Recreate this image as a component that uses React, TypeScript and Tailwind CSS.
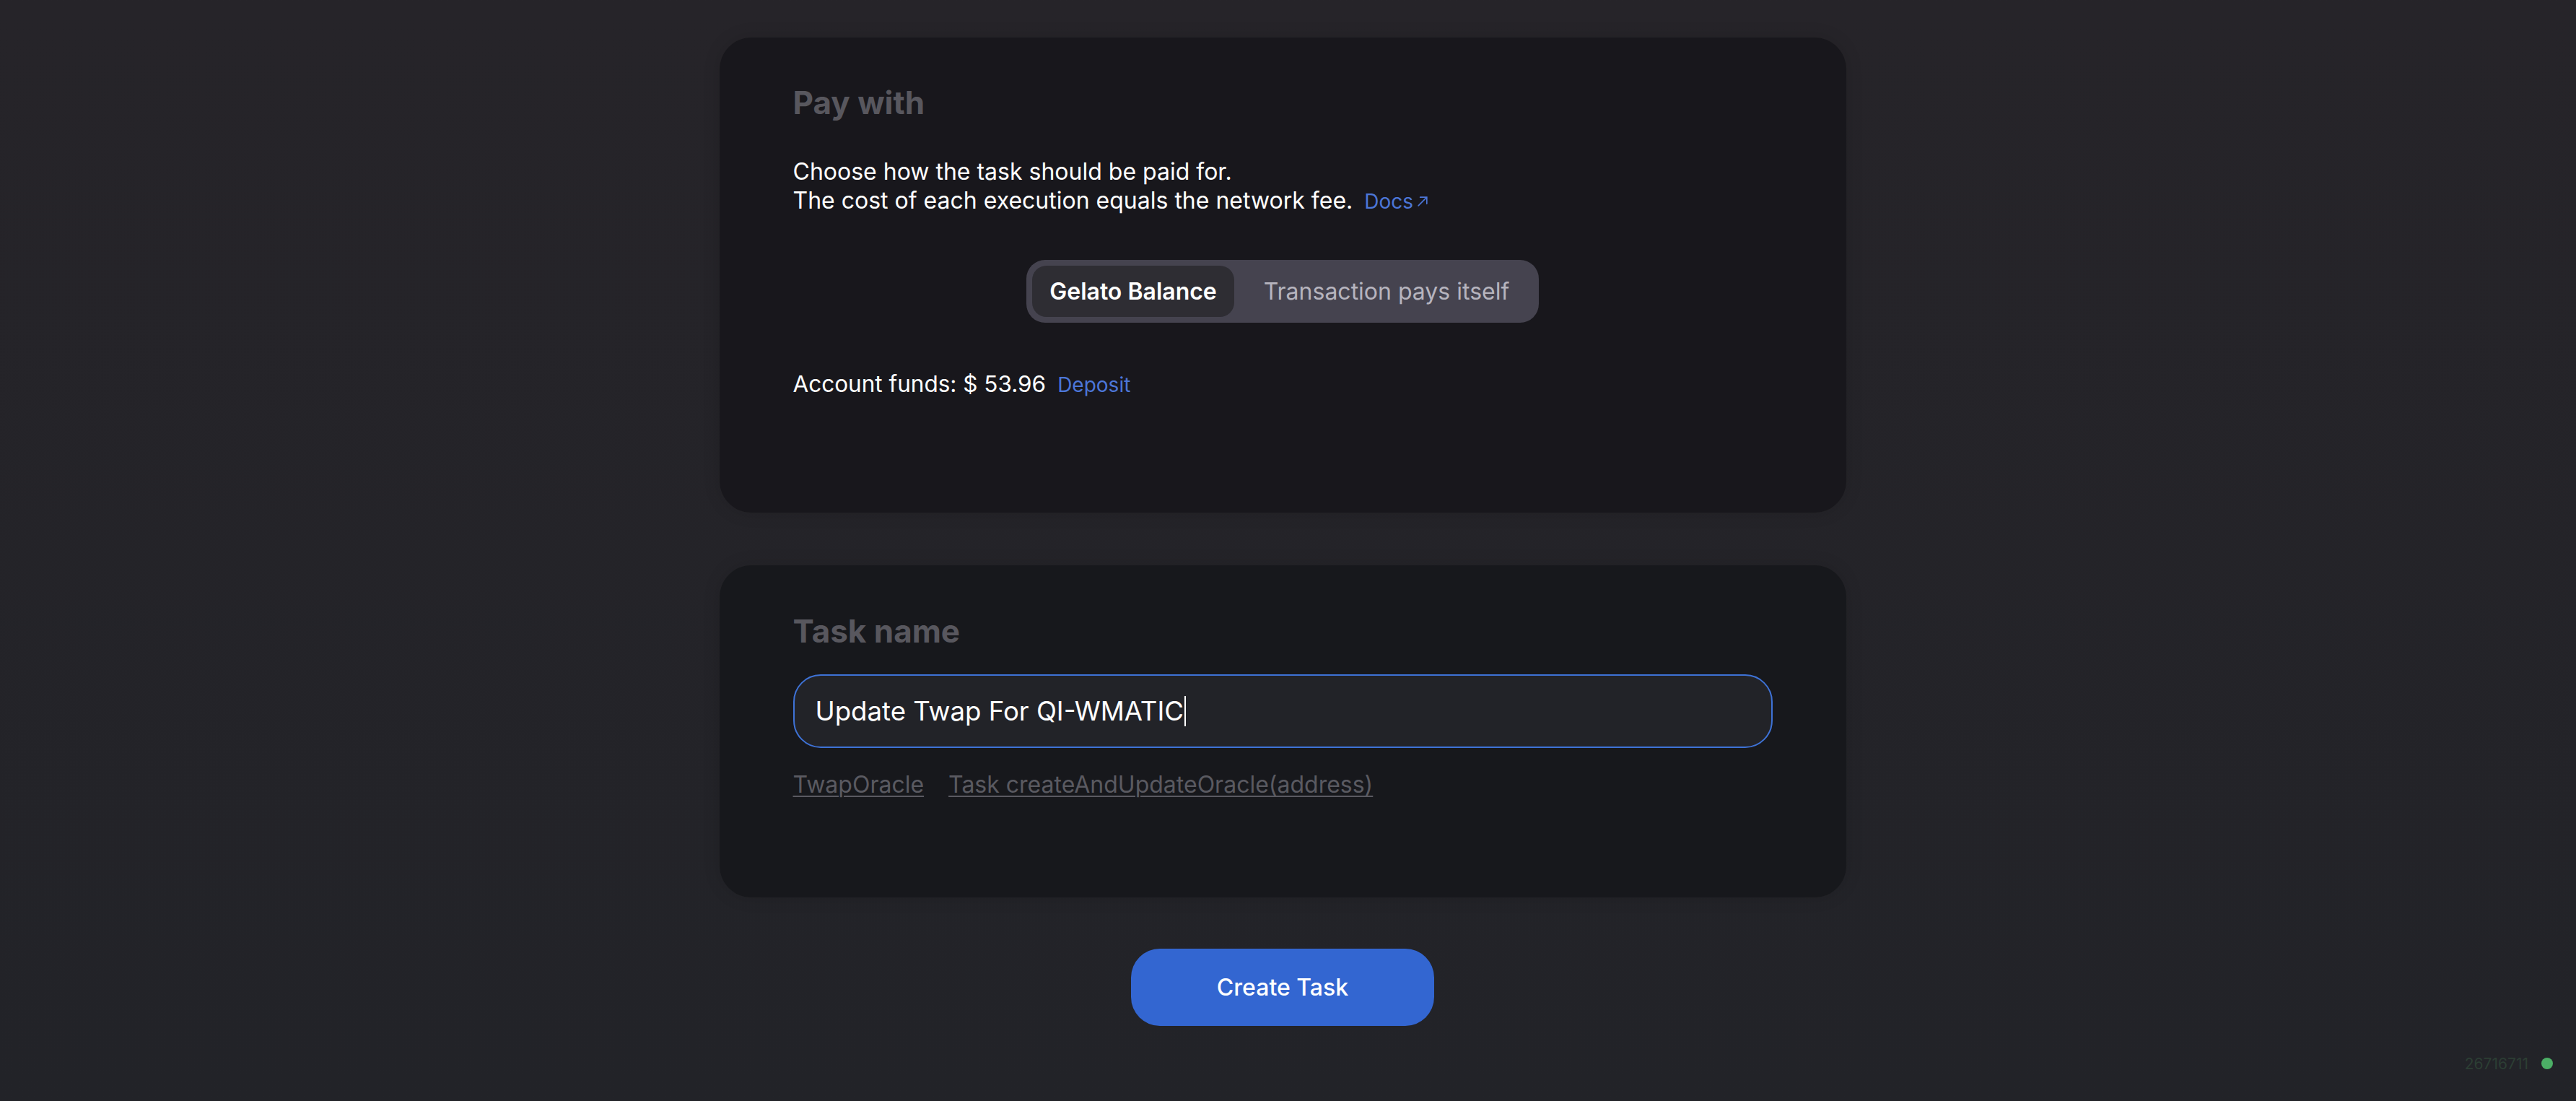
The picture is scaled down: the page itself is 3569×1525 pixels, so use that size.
import React from "react";

export default function App() {
  return (
    <div
      className="w-full h-[1525px] bg-gradient-to-b from-[#262429] to-[#222328] text-white overflow-hidden relative"
      style={{ fontFamily: "Inter, 'Noto Sans', sans-serif" }}
    >
      <div className="pr-[15px] flex flex-col items-center pt-[52px]">
        {/* Card 1 */}
        <div className="w-[1561px] h-[658px] bg-[#18171c] rounded-[44px] px-[102px] pt-[68px] shadow-[0_0_24px_rgba(0,0,0,0.12)]">
          <h2 className="text-[44px] leading-[44px] font-bold text-[#58575e]">Pay with</h2>
          <div className="mt-[54px] text-[32px] leading-[40px] text-white">
            <p>Choose how the task should be paid for.</p>
            <p className="flex items-baseline">
              <span>The cost of each execution equals the network fee.</span>
              <a className="ml-[16px] text-[28px] text-[#4c76d8] flex items-baseline">
                Docs
                <svg width="20" height="20" viewBox="0 0 24 24" className="ml-[3px]" fill="none" stroke="#4c76d8" strokeWidth="2" strokeLinecap="round">
                  <path d="M5 19 19 5M8 5h11v11" />
                </svg>
              </a>
            </p>
          </div>
          <div className="mt-[61px] flex justify-center">
            <div className="flex items-center p-[8px] bg-[#45434f] rounded-[26px] w-[710px] h-[87px]">
              <div className="h-[71px] w-[280px] rounded-[20px] bg-[#2e2d33] flex items-center justify-center text-[32px] font-semibold text-white">
                Gelato Balance
              </div>
              <div className="flex-1 flex items-center justify-center pl-[8px] text-[32px] text-[#b6b4be]">
                Transaction pays itself
              </div>
            </div>
          </div>
          <div className="mt-[65px] flex items-baseline text-[31.5px] leading-[40px]">
            <span>Account funds: $ 53.96</span>
            <a className="ml-[16px] text-[28px] text-[#4c76d8]">Deposit</a>
          </div>
        </div>

        {/* Card 2 */}
        <div className="mt-[73px] w-[1561px] h-[460px] bg-[#17181c] rounded-[44px] px-[102px] pt-[69px] shadow-[0_0_24px_rgba(0,0,0,0.12)]">
          <h2 className="text-[44px] leading-[44px] font-bold text-[#58575e]">Task name</h2>
          <div className="mt-[38px] h-[102px] rounded-[38px] border-2 border-[#3e72d6] bg-[#222328] flex items-center px-[29px]">
            <span className="text-[36.6px] text-white">Update Twap For QI-WMATIC</span>
            <span className="w-[2px] h-[42px] bg-white ml-[1px]" />
          </div>
          <div className="mt-[31px] flex gap-[34px] text-[32px] leading-[40px] text-[#5a5a61]">
            <a className="underline underline-offset-[4px] decoration-[2px]">TwapOracle</a>
            <a className="underline underline-offset-[4px] decoration-[2px]">Task createAndUpdateOracle(address)</a>
          </div>
        </div>

        {/* Button */}
        <button className="mt-[71px] w-[420px] h-[107px] rounded-[40px] bg-[#3366d1] text-white text-[32px] font-medium">
          Create Task
        </button>
      </div>

      <div className="absolute right-[32px] bottom-[36px] flex items-center gap-[18px]">
        <span className="text-[21px] text-[#2c3e34]">26716711</span>
        <span className="w-[16px] h-[16px] rounded-full bg-[#4caf66]" />
      </div>
    </div>
  );
}
